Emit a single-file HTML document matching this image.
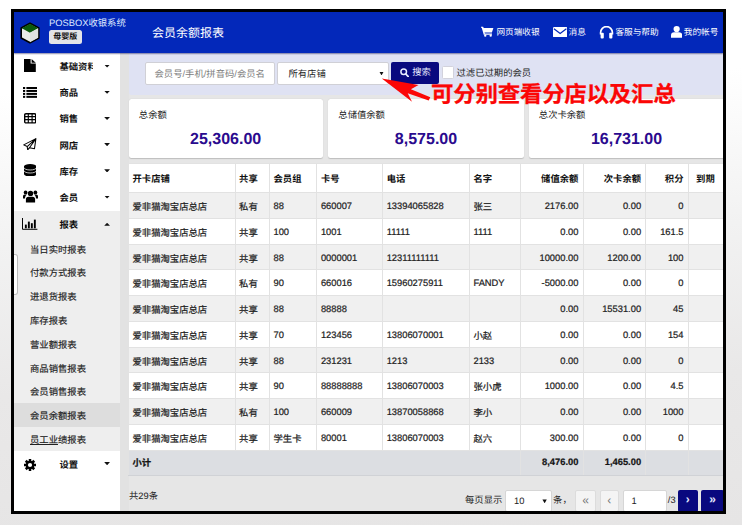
<!DOCTYPE html>
<html lang="zh-CN">
<head>
<meta charset="utf-8">
<title>会员余额报表</title>
<style>
*{box-sizing:border-box;margin:0;padding:0}
html,body{width:742px;height:525px;overflow:hidden}
body{text-rendering:geometricPrecision;font-family:"Liberation Sans","Noto Sans CJK SC",sans-serif;font-size:9.33px;color:#222;
 background:linear-gradient(178deg,#ffffff 0%,#ffffff 17%,#f2f2f2 45%,#e9e8e8 72%,#e6e5e5 100%);position:relative}
#frame{position:absolute;left:11px;top:9px;width:715px;height:505px;border:3px solid #000;background:#e6e6e6;overflow:hidden}
#app{position:absolute;left:0;top:0;width:709px;height:499px;overflow:hidden}
/* header */
#hdr{position:absolute;left:0;top:0;width:709px;height:41.2px;z-index:2;box-shadow:0 0.6px 1.2px rgba(0,0,70,.45);background:#0328ba}
#logo{position:absolute;left:5px;top:10px}
#brand{position:absolute;left:35px;top:5px;color:#dfe8ff;font-size:9.33px;line-height:12px;white-space:nowrap}
#badge{position:absolute;left:34.7px;top:17.7px;width:33px;height:14.2px;background:#e4e4e8;border-radius:2.5px;color:#111;font-weight:bold;font-size:8px;line-height:14px;text-align:center}
#title{position:absolute;left:138px;top:11.7px;color:#fff;font-size:12px;line-height:18px;white-space:nowrap}
.nav{position:absolute;top:12px;color:#fff;font-size:8.67px;line-height:16px;white-space:nowrap}
.nav svg{position:absolute}
/* sidebar */
#side{position:absolute;left:0;top:41.5px;width:106px;height:458px;background:#fff;box-shadow:0 -1px 0 #fff}
#gut{position:absolute;left:106px;top:41px;width:8.5px;height:458px;background:#e2e2e2}
.mi{position:absolute;left:0;width:106px;height:26.2px;margin-top:-1px}
.mi.rp{margin-top:0}
.mi .lb{position:absolute;left:45.4px;top:0;width:33.3px;overflow:hidden;white-space:nowrap;font-weight:bold;font-size:9.33px;line-height:26.2px;padding-top:1.5px;height:26.2px;color:#111}
.mi .cr{position:absolute;left:90.2px;top:12px;width:5.8px;height:3.1px;background:#111;clip-path:polygon(0 0,100% 0,50% 100%)}
.mi .cr.up{clip-path:polygon(0 100%,100% 100%,50% 0)}
.mi svg{position:absolute}
#sub{position:absolute;left:0;top:224.4px;width:106px;height:214.2px;background:#eeeeee}
.si{position:absolute;left:0;width:106px;height:23.8px;line-height:23.8px;padding-top:1.7px;overflow:hidden;-webkit-text-stroke:0.15px #222;padding-left:16px;font-size:9.33px;color:#222;white-space:nowrap}
.si.on{background:#dddddd}
#handle{position:absolute;left:0;top:242px;width:3.5px;height:41px;background:#fff;border:0.7px solid #bbb;border-left:none;border-radius:0 3px 3px 0}
/* main */
#main{position:absolute;left:114.5px;top:41px;width:595px;height:458px;background:#e6e6e6}
#filter{position:absolute;left:0;top:0;width:595px;height:41.8px;background:#dfe2f3;border-radius:0 0 0 2.5px}
#q{position:absolute;left:16.6px;top:8.6px;width:130.2px;height:23px;background:#fff;border:0.7px solid #d0d0d6;border-radius:2px;color:#7c7c7c;font-size:9.33px;line-height:23.2px;padding-left:8.4px;white-space:nowrap}
#sel{position:absolute;left:148.4px;top:8.6px;width:112px;height:23px;background:#fff;border:0.7px solid #d0d0d6;border-radius:2px;color:#222;font-size:9.33px;line-height:23.4px;padding-left:10.5px;white-space:nowrap}
#sel i{position:absolute;right:4.2px;top:9px;width:4.4px;height:3.8px;background:#111;clip-path:polygon(0 0,100% 0,50% 100%)}
#btn{position:absolute;left:262.2px;top:9px;width:48px;height:21.5px;background:#09097f;border-radius:2px;color:#e8ecff;font-size:9.33px;line-height:21.5px;white-space:nowrap}
#btn span{position:absolute;left:21.6px;top:0}
#btn svg{position:absolute;left:9px;top:5.5px}
#chk{position:absolute;left:313.8px;top:13.4px;width:11.6px;height:12.2px;background:#fff;border:0.7px solid #d2d2dc;border-radius:1.5px}
#chkl{position:absolute;left:328px;top:9px;line-height:22px;font-size:9.33px;color:#222;white-space:nowrap}
.card{position:absolute;top:46px;height:59px;background:#fff;border-radius:2.5px;box-shadow:0 0.7px 1px rgba(0,0,0,.18)}
.card .l{position:absolute;left:10.3px;top:10px;font-size:9.33px;line-height:12px;color:#222;white-space:nowrap}
.card .v{position:absolute;left:0;right:0;top:31px;text-align:center;font-weight:bold;font-size:16px;line-height:20px;color:#2a0a8e;white-space:nowrap}
#anno{position:absolute;left:302.6px;top:27.1px;color:#fb0606;font-weight:bold;font-size:22.5px;line-height:30px;white-space:nowrap;letter-spacing:-0.29px;-webkit-text-stroke:0.25px #fb0606}
#arrow{position:absolute;left:250px;top:15px}
/* table */
#tbl{position:absolute;left:-0.4px;top:110px;width:640px;border-collapse:collapse;table-layout:fixed;background:#fff;font-size:9.33px}
#tbl th,#tbl td{border:0.7px solid #e2e2e2;padding:0 4.2px 0 3.4px;text-align:left;white-space:nowrap;overflow:hidden;color:#222;font-weight:normal}
#tbl th{height:29px;font-weight:bold;color:#111;padding-bottom:1px}
#tbl th.last{padding-left:7.4px}
#tbl td{height:25.76px;padding-top:1.5px;-webkit-text-stroke:0.22px #222}
#tbl tr.g td{background:#f0f0f0}
#tbl .r{text-align:right}
#tbl tr.sum td{background:#dcdee2;font-weight:bold;color:#111;height:25.6px;padding-top:0;padding-bottom:1.2px;border-bottom-color:#d0d2d6}
#cnt{position:absolute;left:0.5px;top:436px;line-height:14px;font-size:9.33px;color:#222}
.pg{position:absolute;top:437px;height:22px;font-size:9.33px;line-height:21px;white-space:nowrap;color:#222}
.pb{background:#f4f4f4;border:0.7px solid #dcdcdc;border-radius:2px;text-align:center;color:#777;font-size:12px;line-height:19.5px}
.pn{background:#09097f;border-radius:2px;text-align:center;color:#e8ecff;font-weight:bold;font-size:12px;line-height:19.5px}
.pi{background:#fff;border:0.7px solid #d6d6d6;border-radius:2px;padding-left:8px}
</style>
</head>
<body>
<div id="frame"><div id="app">

<div id="hdr">
 <svg id="logo" width="22" height="22" viewBox="0 0 22 22">
  <polygon points="11,1.2 19.8,6 19.8,16 11,20.8 2.2,16 2.2,6" fill="#e9ebe9" stroke="#000" stroke-width="1.6" stroke-linejoin="round"/>
  <polygon points="11,1.8 19.2,6.2 11,10.8 2.8,6.2" fill="#0b5a0b"/>
  <polygon points="11,10.8 19.2,6.2 19.2,15.7 11,20.2" fill="#dfe2df"/>
 </svg>
 <div id="brand">POSBOX收银系统</div>
 <div id="badge">母婴版</div>
 <div id="title">会员余额报表</div>

 <div class="nav" style="left:467.3px;padding-left:15.1px">
  <svg width="13" height="11" viewBox="0 0 11 10" preserveAspectRatio="none" style="left:0;top:2.2px"><path d="M0,0.6h1.8l0.5,1.2h8.2l-1.3,4.2h-6.2l0.3,0.9h6v1h-7l-0.5,-1.9l-1.2,-4.4h-1.1z" fill="#fff"/><circle cx="3.6" cy="8.8" r="1" fill="#fff"/><circle cx="8.2" cy="8.8" r="1" fill="#fff"/></svg>
  网页端收银</div>
 <div class="nav" style="left:538.5px;padding-left:16px">
  <svg width="14.3" height="10.3" viewBox="0 0 12.5 9" preserveAspectRatio="none" style="left:0;top:2.6px"><rect x="0" y="0" width="12.5" height="9" rx="1" fill="#fff"/><path d="M0.8,1.6l5.45,4l5.45,-4" fill="none" stroke="#0328ba" stroke-width="1.1"/></svg>
  消息</div>
 <div class="nav" style="left:585px;padding-left:16.4px">
  <svg width="15" height="13" viewBox="0 0 15 13" style="left:0;top:1.5px"><path d="M1.6,8.5v-2a5.9,5.9 0 0 1 11.8,0v2" fill="none" stroke="#fff" stroke-width="1.7"/><rect x="1.6" y="6.8" width="3.2" height="5.8" rx="1" fill="#fff"/><rect x="10.2" y="6.8" width="3.2" height="5.8" rx="1" fill="#fff"/></svg>
  客服与帮助</div>
 <div class="nav" style="left:657.2px;padding-left:12.6px">
  <svg width="11.3" height="11.8" viewBox="0 0 10.5 11" preserveAspectRatio="none" style="left:0;top:2.2px"><circle cx="5.25" cy="2.9" r="2.9" fill="#fff"/><path d="M0,11v-2.2a3,3 0 0 1 3,-3h4.5a3,3 0 0 1 3,3v2.2z" fill="#fff"/></svg>
  我的帐号</div>
</div>

<div id="side">
 <!-- 基础资料 -->
 <div class="mi" style="top:0">
  <svg width="12" height="13" viewBox="0 0 12 13" style="left:10.2px;top:6.4px"><path d="M0,0h6.6v4.6h5.2v8.4h-11.8z" fill="#000"/><path d="M7.6,0l4.2,3.7h-4.2z" fill="#000"/></svg>
  <div class="lb">基础资料</div><i class="cr"></i></div>
 <div class="mi" style="top:26.2px">
  <svg width="14" height="11" viewBox="0 0 14 11" style="left:9px;top:8px"><g fill="#000"><rect x="0" y="0" width="2.2" height="2"/><rect x="3.4" y="0" width="10.6" height="2"/><rect x="0" y="2.95" width="2.2" height="2"/><rect x="3.4" y="2.95" width="10.6" height="2"/><rect x="0" y="5.9" width="2.2" height="2"/><rect x="3.4" y="5.9" width="10.6" height="2"/><rect x="0" y="8.85" width="2.2" height="2"/><rect x="3.4" y="8.85" width="10.6" height="2"/></g></svg>
  <div class="lb">商品</div><i class="cr"></i></div>
 <div class="mi" style="top:52.4px">
  <svg width="12.4" height="10.6" viewBox="0 0 12.4 10.6" style="left:9.8px;top:8.4px"><rect x="0.7" y="0.7" width="11" height="9.2" rx="1.2" fill="none" stroke="#000" stroke-width="1.4"/><path d="M0.6,3.7h11.2M0.6,6.6h11.2M4.3,1v9M8.1,1v9" stroke="#000" stroke-width="1.15" fill="none"/></svg>
  <div class="lb">销售</div><i class="cr"></i></div>
 <div class="mi" style="top:78.6px">
  <svg width="13.6" height="12.6" viewBox="0 0 13.6 12.6" style="left:9.2px;top:6.5px"><path d="M12.9,0.6L0.7,6.9L4.2,8.6L4.7,11.9L6.5,9.7L11.5,10.7Z M4.2,8.6L12.9,0.6L6.5,9.7" fill="none" stroke="#000" stroke-width="1.05" stroke-linejoin="round"/></svg>
  <div class="lb">网店</div><i class="cr"></i></div>
 <div class="mi" style="top:104.8px">
  <svg width="12.4" height="12.4" viewBox="0 0 12.4 12.4" style="left:9.8px;top:6.8px"><path d="M0,2.3v7.8a6.2,2.3 0 0 0 12.4,0v-7.8a6.2,2.3 0 0 0 -12.4,0z" fill="#000"/><path d="M0,3.5a6.2,2.3 0 0 0 12.4,0M0,6.5a6.2,2.3 0 0 0 12.4,0" transform="translate(0,0.2)" fill="none" stroke="#fff" stroke-width="0.75"/></svg>
  <div class="lb">库存</div><i class="cr"></i></div>
 <div class="mi" style="top:131px">
  <svg width="15" height="12.6" viewBox="0 0 15 12.6" style="left:8.6px;top:6.8px"><g fill="#000"><circle cx="7.5" cy="3.4" r="2.7"/><path d="M2.9,12.6v-3.3a2.6,2.6 0 0 1 2.6,-2.6h4a2.6,2.6 0 0 1 2.6,2.6v3.3z"/><circle cx="2.6" cy="2.4" r="1.9"/><circle cx="12.4" cy="2.4" r="1.9"/><path d="M0,8.6v-2.4a1.6,1.6 0 0 1 1.6,-1.6h2.4a3.6,3.6 0 0 0 -1.9,2.8v1.2z"/><path d="M15,8.6v-2.4a1.6,1.6 0 0 0 -1.6,-1.6h-2.4a3.6,3.6 0 0 1 1.9,2.8v1.2z"/></g></svg>
  <div class="lb">会员</div><i class="cr"></i></div>
 <div class="mi rp" style="top:157.2px;background:#eeeeee">
  <svg width="15.4" height="11.8" viewBox="0 0 15.4 11.8" style="left:8.2px;top:7.6px"><path d="M0.5,0v11.3h14.9" fill="none" stroke="#000" stroke-width="1"/><g fill="#000"><rect x="2.9" y="6.6" width="1.9" height="3.7"/><rect x="5.9" y="3.6" width="1.9" height="6.7"/><rect x="8.9" y="5.2" width="1.9" height="5.1"/><rect x="11.9" y="1.6" width="1.9" height="8.7"/></g></svg>
  <div class="lb">报表</div><i class="cr up"></i></div>
 <div id="sub" style="top:183.4px">
  <div class="si" style="top:0">当日实时报表</div>
  <div class="si" style="top:23.8px">付款方式报表</div>
  <div class="si" style="top:47.6px">进退货报表</div>
  <div class="si" style="top:71.4px">库存报表</div>
  <div class="si" style="top:95.2px">营业额报表</div>
  <div class="si" style="top:119px">商品销售报表</div>
  <div class="si" style="top:142.8px">会员销售报表</div>
  <div class="si on" style="top:166.6px">会员余额报表</div>
  <div class="si" style="top:190.4px"><u>员工业</u>绩报表</div>
 </div>
 <div class="mi" style="top:397.6px">
  <svg width="12" height="12" viewBox="-6 -6 12 12" style="left:10.2px;top:8.6px"><g fill="#000"><circle r="4.3"/><rect x="-1.25" y="-6" width="2.5" height="12"/><rect x="-1.25" y="-6" width="2.5" height="12" transform="rotate(45)"/><rect x="-1.25" y="-6" width="2.5" height="12" transform="rotate(90)"/><rect x="-1.25" y="-6" width="2.5" height="12" transform="rotate(135)"/></g><circle r="2.1" fill="#fff"/></svg>
  <div class="lb">设置</div><i class="cr"></i></div>
</div>
<div id="gut"></div>
<div id="handle"></div>

<div id="main">
 <div id="filter">
  <div id="q">会员号/手机/拼音码/会员名</div>
  <div id="sel">所有店铺<i></i></div>
  <div id="btn"><svg width="9" height="9.5" viewBox="0 0 9 9.5"><circle cx="3.7" cy="3.7" r="2.8" fill="none" stroke="#e8ecff" stroke-width="1.5"/><path d="M5.8,6l2.6,2.8" stroke="#e8ecff" stroke-width="1.8" stroke-linecap="round"/></svg><span>搜索</span></div>
  <div id="chk"></div>
  <div id="chkl">过滤已过期的会员</div>
 </div>

 <div class="card" style="left:0;width:194.3px"><div class="l">总余额</div><div class="v">25,306.00</div></div>
 <div class="card" style="left:199.5px;width:196px"><div class="l">总储值余额</div><div class="v">8,575.00</div></div>
 <div class="card" style="left:400px;width:196px"><div class="l">总次卡余额</div><div class="v">16,731.00</div></div>

 <table id="tbl">
  <colgroup><col style="width:106.6px"><col style="width:34.4px"><col style="width:47.4px"><col style="width:65.8px"><col style="width:86.8px"><col style="width:51px"><col style="width:62.5px"><col style="width:62.7px"><col style="width:42.4px"><col style="width:80.4px"></colgroup>
  <tr><th>开卡店铺</th><th>共享</th><th>会员组</th><th>卡号</th><th>电话</th><th>名字</th><th class="r">储值余额</th><th class="r">次卡余额</th><th class="r">积分</th><th class="last">到期</th></tr>
  <tr class="g"><td>爱非猫淘宝店总店</td><td>私有</td><td>88</td><td>660007</td><td>13394065828</td><td>张三</td><td class="r">2176.00</td><td class="r">0.00</td><td class="r">0</td><td></td></tr>
  <tr><td>爱非猫淘宝店总店</td><td>共享</td><td>100</td><td>1001</td><td>11111</td><td>1111</td><td class="r">0.00</td><td class="r">0.00</td><td class="r">161.5</td><td></td></tr>
  <tr class="g"><td>爱非猫淘宝店总店</td><td>共享</td><td>88</td><td>0000001</td><td>12311111111</td><td></td><td class="r">10000.00</td><td class="r">1200.00</td><td class="r">100</td><td></td></tr>
  <tr><td>爱非猫淘宝店总店</td><td>私有</td><td>90</td><td>660016</td><td>15960275911</td><td>FANDY</td><td class="r">-5000.00</td><td class="r">0.00</td><td class="r">0</td><td></td></tr>
  <tr class="g"><td>爱非猫淘宝店总店</td><td>共享</td><td>88</td><td>88888</td><td></td><td></td><td class="r">0.00</td><td class="r">15531.00</td><td class="r">45</td><td></td></tr>
  <tr><td>爱非猫淘宝店总店</td><td>共享</td><td>70</td><td>123456</td><td>13806070001</td><td>小赵</td><td class="r">0.00</td><td class="r">0.00</td><td class="r">154</td><td></td></tr>
  <tr class="g"><td>爱非猫淘宝店总店</td><td>共享</td><td>88</td><td>231231</td><td>1213</td><td>2133</td><td class="r">0.00</td><td class="r">0.00</td><td class="r">0</td><td></td></tr>
  <tr><td>爱非猫淘宝店总店</td><td>共享</td><td>90</td><td>88888888</td><td>13806070003</td><td>张小虎</td><td class="r">1000.00</td><td class="r">0.00</td><td class="r">4.5</td><td></td></tr>
  <tr class="g"><td>爱非猫淘宝店总店</td><td>私有</td><td>100</td><td>660009</td><td>13870058868</td><td>李小</td><td class="r">0.00</td><td class="r">0.00</td><td class="r">1000</td><td></td></tr>
  <tr><td>爱非猫淘宝店总店</td><td>共享</td><td>学生卡</td><td>80001</td><td>13806070003</td><td>赵六</td><td class="r">300.00</td><td class="r">0.00</td><td class="r">0</td><td></td></tr>
  <tr class="sum"><td colspan="6">小计</td><td class="r">8,476.00</td><td class="r">1,465.00</td><td></td><td></td></tr>
 </table>

 <div id="cnt">共29条</div>
 <div class="pg" style="left:336.5px">每页显示</div>
 <div class="pg pi" style="left:376.5px;width:47px">10<i style="position:absolute;right:4.2px;top:8.4px;width:4.4px;height:3.8px;background:#111;clip-path:polygon(0 0,100% 0,50% 100%)"></i></div>
 <div class="pg" style="left:424.6px">条，</div>
 <div class="pg pb" style="left:446.5px;width:21px">«</div>
 <div class="pg pb" style="left:471.5px;width:18.6px">‹</div>
 <div class="pg pi" style="left:494px;width:44.6px">1</div>
 <div class="pg" style="left:539.3px">/3</div>
 <div class="pg pn" style="left:549.3px;width:20px">›</div>
 <div class="pg pn" style="left:572.5px;width:23px">»</div>

 <svg id="arrow" width="70" height="50" viewBox="0 0 70 50">
  <path d="M2.8,10.5 L39.5,17 L31.9,21.3 L51.3,29.3 L49.7,32.6 L28.7,25.2 L33,33.7 Z" fill="#fb0606"/>
 </svg>
 <div id="anno">可分别查看分店以及汇总</div>
</div>

</div></div>
</body>
</html>
